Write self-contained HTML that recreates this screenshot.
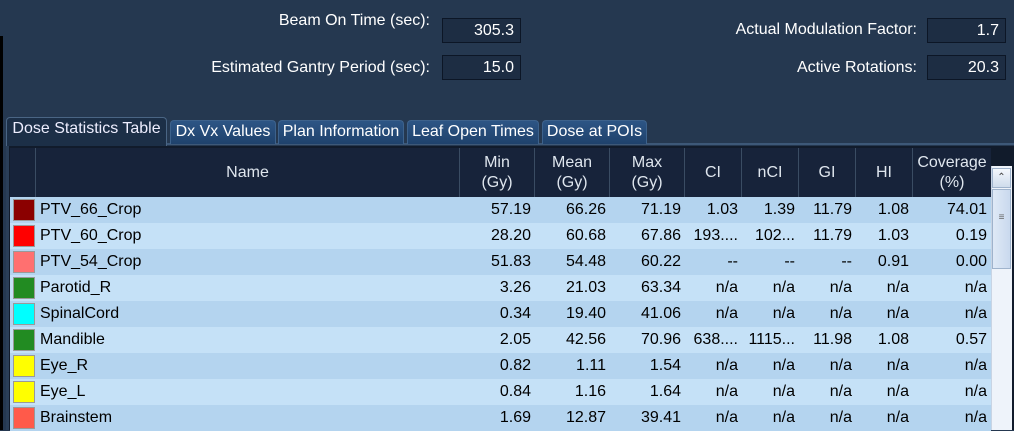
<!DOCTYPE html>
<html><head><style>
*{margin:0;padding:0;box-sizing:border-box}
body{width:1014px;height:430px;overflow:hidden;background:#253850;font-family:"Liberation Sans",sans-serif;position:relative;color:#fff}
.a{position:absolute}
.lbl{font-size:16px;color:#fff;text-align:right}
.box{border:1px solid #0c1626;background:#1d2d43;font-size:16px;text-align:right;padding-right:6px;line-height:23px;height:25px}
.tab{position:absolute;top:120px;height:24px;background:linear-gradient(#2d5585,#1f426c);border:1px solid #3d628c;border-bottom:none;border-radius:4px 4px 0 0;font-size:16px;line-height:22px;text-align:center;color:#fff;white-space:nowrap}
.hd{position:absolute;top:148px;height:49px;background:#17233a;font-size:16px;color:#dfe6ee;text-align:center;border-right:1px solid #3a4c63;display:flex;align-items:center;justify-content:center;line-height:20px}
.row{position:absolute;left:10px;width:981px;height:26px;font-size:16px;color:#000}
.row div{position:absolute;top:0;line-height:26px;text-align:right;white-space:nowrap}
.sw{position:absolute;left:3px;top:2px;width:22px;height:22px;border:1px solid #999}
</style></head><body>
<div class="a" style="left:0;top:36px;width:3px;height:394px;background:#000"></div>
<div class="a lbl" style="left:200px;top:12px;width:230px">Beam On Time (sec):</div>
<div class="a box" style="left:442px;top:18px;width:79px">305.3</div>
<div class="a lbl" style="left:150px;top:59px;width:280px">Estimated Gantry Period (sec):</div>
<div class="a box" style="left:442px;top:55px;width:79px">15.0</div>
<div class="a lbl" style="left:650px;top:21px;width:267px">Actual Modulation Factor:</div>
<div class="a box" style="left:927px;top:18px;width:79px">1.7</div>
<div class="a lbl" style="left:650px;top:59px;width:267px">Active Rotations:</div>
<div class="a box" style="left:927px;top:55px;width:79px">20.3</div>

<div class="a" style="left:6px;top:143px;width:1008px;height:2px;background:#3d5878"></div>
<div class="a" style="left:6px;top:143px;width:3px;height:287px;background:#2a3e57"></div>
<div class="tab" style="left:6px;top:117px;width:161px;height:29px;background:#1c2f47;border-color:#4a6584;color:#eef">Dose Statistics Table</div>
<div class="tab" style="left:170px;width:106px">Dx Vx Values</div>
<div class="tab" style="left:278px;width:126px">Plan Information</div>
<div class="tab" style="left:407px;width:132px">Leaf Open Times</div>
<div class="tab" style="left:542px;width:105px">Dose at POIs</div>

<div class="a" style="left:9px;top:146px;width:1005px;height:284px;background:#111b2b"></div>
<div class="hd" style="left:10px;width:26px"></div>
<div class="hd" style="left:36px;width:424px">Name</div>
<div class="hd" style="left:460px;width:75px">Min<br>(Gy)</div>
<div class="hd" style="left:535px;width:75px">Mean<br>(Gy)</div>
<div class="hd" style="left:610px;width:75px">Max<br>(Gy)</div>
<div class="hd" style="left:685px;width:57px">CI</div>
<div class="hd" style="left:742px;width:57px">nCI</div>
<div class="hd" style="left:799px;width:57px">GI</div>
<div class="hd" style="left:856px;width:57px">HI</div>
<div class="hd" style="left:913px;width:78px;border-right:none">Coverage<br>(%)</div>

<div class="a" style="left:991px;top:166px;width:21px;height:264px;background:#eef3fa;border-left:1px solid #c8d4e4"></div>
<div class="a" style="left:992px;top:168px;width:19px;height:20px;background:linear-gradient(#f4f8fd,#cfdcec);border:1px solid #9fb3cc;font-size:10px;color:#444;text-align:center;line-height:18px">&#8963;</div>
<div class="a" style="left:992px;top:189px;width:19px;height:80px;background:linear-gradient(90deg,#dfe9f6,#c9d9ee);border:1px solid #9fb3cc;font-size:10px;color:#666;text-align:center;line-height:56px">&#8801;</div>

<div id="rows"></div>
<script>
var d=[["#8b0000","PTV_66_Crop","57.19","66.26","71.19","1.03","1.39","11.79","1.08","74.01"],
["#ff0000","PTV_60_Crop","28.20","60.68","67.86","193....","102...","11.79","1.03","0.19"],
["#ff7070","PTV_54_Crop","51.83","54.48","60.22","--","--","--","0.91","0.00"],
["#228b22","Parotid_R","3.26","21.03","63.34","n/a","n/a","n/a","n/a","n/a"],
["#00ffff","SpinalCord","0.34","19.40","41.06","n/a","n/a","n/a","n/a","n/a"],
["#228b22","Mandible","2.05","42.56","70.96","638....","1115...","11.98","1.08","0.57"],
["#ffff00","Eye_R","0.82","1.11","1.54","n/a","n/a","n/a","n/a","n/a"],
["#ffff00","Eye_L","0.84","1.16","1.64","n/a","n/a","n/a","n/a","n/a"],
["#ff5a4a","Brainstem","1.69","12.87","39.41","n/a","n/a","n/a","n/a","n/a"]];
var ends=[535,610,685,742,799,856,913,991],starts=[460,535,610,685,742,799,856,913];
var h="";
d.forEach(function(r,i){
h+='<div class="row" style="top:'+(197+i*26)+'px;background:'+(i%2?'#c5e1f7':'#b4d4ef')+'"><span class="sw" style="background:'+r[0]+'"></span><div style="left:30px;text-align:left">'+r[1]+'</div>';
for(var j=0;j<8;j++){h+='<div style="left:'+(starts[j]-10)+'px;width:'+(ends[j]-starts[j]-4)+'px">'+r[j+2]+'</div>';}
h+='</div>';});
document.getElementById("rows").innerHTML=h;
</script>
</body></html>
